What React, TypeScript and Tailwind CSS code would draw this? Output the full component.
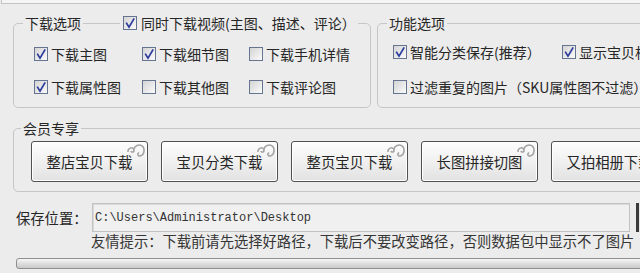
import React from 'react';

const CJK = "font-['Noto_Sans_CJK_SC','Noto_Sans',sans-serif]";

function Box({ checked }: { checked: boolean }) {
  return (
    <span className="flex h-[14px] w-[14px] shrink-0 items-center justify-center border border-[#66758f] bg-gradient-to-br from-[#d4d4d4] to-[#fbfbfb]">
      {checked && (
        <svg width="12" height="12" viewBox="0 0 12 12">
          <path d="M2.2 5.6 L5 10.2 L10.2 1.4" fill="none" stroke="#2a3a9e" strokeWidth="1.7" strokeLinejoin="miter" />
        </svg>
      )}
    </span>
  );
}

function Check({ checked, label, gap = 'gap-[3px]' }: { checked: boolean; label: string; gap?: string }) {
  return (
    <label className={`flex items-center ${gap} whitespace-nowrap text-[14px] leading-[18px] text-[#262626]`}>
      <Box checked={checked} />
      <span>{label}</span>
    </label>
  );
}

function Ornament() {
  return (
    <svg className="absolute right-[1px] top-[1px]" width="20" height="16" viewBox="0 0 20 16">
      <path d="M2 9 C1.5 5 6.5 3.5 7.8 6.5 C8.8 9 5.5 10.2 5 7.8" fill="none" stroke="#a3a3a3" strokeWidth="1.5" />
      <path d="M7.8 6.5 C8.5 2.5 13 1 16 2.8 C19.2 5 18.6 11.5 14.8 12.8 C11.8 13.8 10.6 10.4 13.2 9.8" fill="none" stroke="#a3a3a3" strokeWidth="1.5" />
    </svg>
  );
}

function VipButton({ label }: { label: string }) {
  return (
    <div className="relative flex h-[41px] w-[117px] shrink-0 items-center justify-center overflow-hidden rounded-[3px] border border-[#505050] bg-gradient-to-b from-[#fefefe] to-[#e2e2e2] text-[14.3px] leading-[18px] text-[#262626] shadow-[inset_0_0_0_1px_#ffffff]">
      <span className="whitespace-nowrap">{label}</span>
      <Ornament />
    </div>
  );
}

export default function App() {
  return (
    <div className={`${CJK} flex h-[273px] w-[640px] flex-col overflow-hidden bg-[#ececec] text-[#262626]`}>
      <div className="ml-[1px] h-[4px] w-[700px] shrink-0 border-b border-l border-[#c4c4c4] bg-[#f5f5f5]" />

      <div className="mt-[10px] flex shrink-0 pl-[13px]">
        <fieldset className="h-[94px] w-[358px] shrink-0 rounded-[5px] border border-[#c6c6c6]">
          <legend className="ml-[9px] flex items-center px-[2px]">
            <span className="text-[14px] leading-[18px]">下载选项</span>
            <span className="ml-[2px] mr-[3px] h-px w-[37px] bg-[#c6c6c6]" />
            <Check checked label="同时下载视频(主图、描述、评论）" gap="gap-[4px]" />
          </legend>
          <div className="mt-[13px] grid grid-cols-[108px_107px_auto] gap-y-[15px] pl-[20px]">
            <Check checked label="下载主图" />
            <Check checked label="下载细节图" />
            <Check checked={false} label="下载手机详情" />
            <Check checked label="下载属性图" />
            <Check checked={false} label="下载其他图" />
            <Check checked={false} label="下载评论图" />
          </div>
        </fieldset>

        <fieldset className="ml-[6px] h-[94px] w-[320px] shrink-0 rounded-[5px] border border-[#c6c6c6]">
          <legend className="ml-[9px] px-[2px] text-[14px] leading-[18px]">功能选项</legend>
          <div className="mt-[11px] grid grid-cols-[169px_auto] gap-y-[17px] pl-[15px]">
            <Check checked label="智能分类保存(推荐）" />
            <Check checked label="显示宝贝相册" />
            <div className="col-span-2">
              <Check checked={false} label="过滤重复的图片（SKU属性图不过滤）" />
            </div>
          </div>
        </fieldset>
      </div>

      <fieldset className="ml-[13px] mt-[11px] h-[73px] w-[700px] shrink-0 rounded-[5px] border border-[#c6c6c6]">
        <legend className="ml-[7px] px-[2px] text-[14px] leading-[18px]">会员专享</legend>
        <div className="mt-[4px] flex gap-[13px] pl-[17px]">
          <VipButton label="整店宝贝下载" />
          <VipButton label="宝贝分类下载" />
          <VipButton label="整页宝贝下载" />
          <VipButton label="长图拼接切图" />
          <VipButton label="又拍相册下载" />
        </div>
      </fieldset>

      <div className="mt-[11px] flex h-[29px] shrink-0 items-center pl-[16px]">
        <span className="w-[76px] shrink-0 whitespace-nowrap text-[14.3px] leading-[18px]">保存位置：</span>
        <div className="flex h-[29px] w-[538px] shrink-0 items-center border border-[#c2c2c2] bg-[#f0f0f0] pl-[2px] shadow-[inset_1px_1px_0_#dadada]">
          <span className="whitespace-nowrap font-['Liberation_Mono',monospace] text-[12px] leading-[16px] text-[#333]">C:\Users\Administrator\Desktop</span>
        </div>
        <div className="ml-[6px] h-[29px] w-[20px] shrink-0 border-l-[3px] border-[#3a3a3a] bg-[#e4e4e4]" />
      </div>

      <div className="shrink-0 whitespace-nowrap pl-[91px] text-[14.3px] leading-[18px] text-[#363636]">
        友情提示：下载前请先选择好路径，下载后不要改变路径，否则数据包中显示不了图片
      </div>

      <div className="ml-[16px] mt-[8px] h-[11px] w-[640px] shrink-0 rounded-[3px] border border-[#8f8f8f] bg-gradient-to-b from-[#f7f7f7] via-[#dedede] to-[#cacaca]" />
    </div>
  );
}
